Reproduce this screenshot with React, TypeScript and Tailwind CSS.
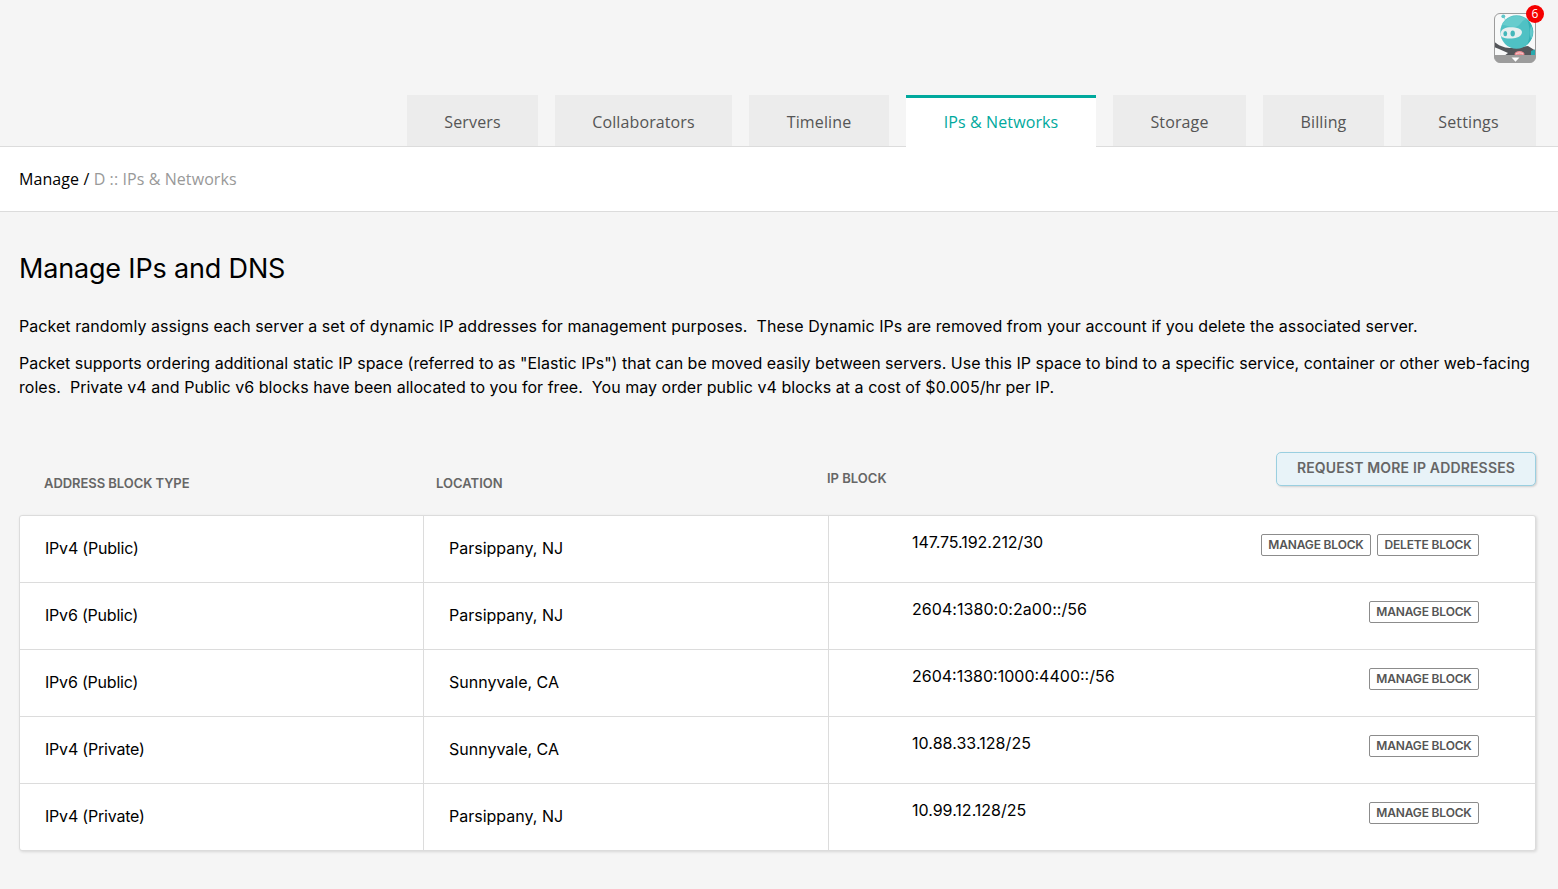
const tabs = [
  { label: "Servers", width: "w-[131px]" },
  { label: "Collaborators", width: "w-[177px]" },
  { label: "Timeline", width: "w-[140px]" },
  { label: "IPs & Networks", width: "w-[190px]", active: true },
  { label: "Storage", width: "w-[133px]" },
  { label: "Billing", width: "w-[121px]" },
  { label: "Settings", width: "w-[135px]" },
];

type Block = {
  type: string;
  location: string;
  ip: string;
  tracking: string;
  deletable?: boolean;
};

const blocks: Block[] = [
  { type: "IPv4 (Public)", location: "Parsippany, NJ", ip: "147.75.192.212/30", tracking: "tracking-[-0.07px]", deletable: true },
  { type: "IPv6 (Public)", location: "Parsippany, NJ", ip: "2604:1380:0:2a00::/56", tracking: "tracking-[0.05px]" },
  { type: "IPv6 (Public)", location: "Sunnyvale, CA", ip: "2604:1380:1000:4400::/56", tracking: "tracking-[0px]" },
  { type: "IPv4 (Private)", location: "Sunnyvale, CA", ip: "10.88.33.128/25", tracking: "tracking-[0.06px]" },
  { type: "IPv4 (Private)", location: "Parsippany, NJ", ip: "10.99.12.128/25", tracking: "tracking-[0px]" },
];

function Avatar() {
  return (
    <div className="relative h-[50px] w-[42px]">
      <svg width="42" height="50" viewBox="0 0 42 50">
        <defs>
          <clipPath id="frame">
            <rect x="0.5" y="0.5" width="41" height="49" rx="5.5" />
          </clipPath>
        </defs>
        <g clipPath="url(#frame)">
          <rect width="42" height="50" fill="#f8f9f9" />
          <path d="M9.5 3.5 12.5 9" stroke="#9fdcdd" strokeWidth="1" />
          <circle cx="9.3" cy="3.3" r="1.9" fill="#5fc6c9" />
          <path d="M0 28.5C5 33 12 36 20 34.5L34 33 42 38V43H10L14 40 5 36 0 34Z" fill="#54565a" />
          <path d="M37 38 42 36V43H37Z" fill="#27a9ae" />
          <ellipse cx="22.5" cy="19" rx="16.2" ry="16.8" fill="#4fc1c4" />
          <path d="M8 12C12 3 24 0 32 6 26 8 27 14 20 14 15 14 12 12 8 12Z" fill="#67cccd" />
          <path d="M33 6C41 13 42 24 33 32 37 23 36 14 33 6Z" fill="#35b0b4" />
          <path d="M37 13C39.5 17 39.5 22 37 26 35.5 22 35.5 17 37 13Z" fill="#65c9cc" />
          <path d="M6.5 20.5C7 15 14 13.5 21 14.5 27 15.5 29 18 27.5 21 25.5 25 19 26 13.5 25.5 9 25 6.5 24 6.5 20.5Z" fill="#e7efef" />
          <ellipse cx="11.3" cy="20.7" rx="1.9" ry="2.6" fill="#43b7ba" />
          <ellipse cx="18.7" cy="20.5" rx="2.2" ry="2.9" fill="#43b7ba" />
          <ellipse cx="25.5" cy="41" rx="5" ry="3" fill="#e98c92" />
          <path d="M22 41C24 39.5 27 39.5 29 41" stroke="#f7d5d7" fill="none" />
          <rect y="42" width="42" height="8" fill="#9c9c9c" />
          <path d="M17.5 44.5H25.5L21.5 48.8Z" fill="#fff" />
        </g>
        <rect x="0.5" y="0.5" width="41" height="49" rx="5.5" fill="none" stroke="#9c9c9c" />
      </svg>
      <span className="absolute -top-[8px] left-[32px] flex h-[18px] w-[18px] items-center justify-center rounded-full bg-[#f50000] font-['Open_Sans',sans-serif] text-[12px] leading-none text-white">
        6
      </span>
    </div>
  );
}

function SmallButton({ label, width }: { label: string; width: string }) {
  return (
    <button
      className={`h-[22px] ${width} shrink-0 rounded-[2px] border border-[#8c8c8c] bg-white text-center text-[12px] leading-[20px] font-semibold tracking-[-0.17px] whitespace-nowrap text-[#555]`}
    >
      {label}
    </button>
  );
}

export default function App() {
  return (
    <div className="flex h-[889px] w-[1558px] flex-col overflow-hidden bg-[#f5f5f5] font-[Inter,sans-serif] text-[16px] text-black">
      <header className="flex h-[147px] flex-col border-b border-[#dcdcdc]">
        <div className="flex h-[95px] shrink-0 justify-end pt-[13px] pr-[22px]">
          <Avatar />
        </div>
        <nav className="flex h-[51px] justify-end gap-[17px] pr-[22px] font-['Open_Sans',sans-serif] tracking-[0.12px]">
          {tabs.map((t) => (
            <a
              key={t.label}
              className={
                t.active
                  ? `${t.width} h-[52px] border-t-3 border-[#00a99d] bg-white text-center leading-[49px] text-[#00a99d]`
                  : `${t.width} h-[51px] bg-[#ececec] text-center leading-[55px] text-[#555]`
              }
            >
              {t.label}
            </a>
          ))}
        </nav>
      </header>

      <div className="h-[65px] border-b border-[#dcdcdc] bg-white pl-[19px] font-['Open_Sans',sans-serif] leading-[65px] tracking-[0.09px]">
        Manage / <span className="text-[#999]">D :: IPs &amp; Networks</span>
      </div>

      <main className="flex flex-col pr-[22px] pl-[19px]">
        <h1 className="mt-[37px] text-[27px] leading-[40px] tracking-[-0.17px]">Manage IPs and DNS</h1>
        <p className="mt-[25px] leading-[24px] tracking-[0.056px] whitespace-nowrap">
          Packet randomly assigns each server a set of dynamic IP addresses for management purposes.&nbsp; These
          Dynamic IPs are removed from your account if you delete the associated server.
        </p>
        <p className="mt-[13px] leading-[24px] whitespace-nowrap">
          <span className="tracking-[0.002px]">
            Packet supports ordering additional static IP space (referred to as "Elastic IPs") that can be moved easily
            between servers. Use this IP space to bind to a specific service, container or other web-facing
          </span>
          <br />
          <span className="tracking-[0.035px]">
            roles.&nbsp; Private v4 and Public v6 blocks have been allocated to you for free.&nbsp; You may order public
            v4 blocks at a cost of $0.005/hr per IP.
          </span>
        </p>

        <div className="mt-[53px] flex h-[63px] text-[13px] leading-[20px] font-semibold text-[#666]">
          <div className="w-[392px] pt-[21px] pl-[25px] tracking-[-0.06px]">ADDRESS BLOCK TYPE</div>
          <div className="w-[392px] pt-[21px] pl-[25px]">LOCATION</div>
          <div className="grow pt-[16px] pl-[24px]">IP BLOCK</div>
          <button className="h-[34px] w-[260px] rounded-[5px] border border-[#9acfe0] bg-[#e8f3f8] pb-[2px] text-[14px] tracking-[0.16px] text-[#666] shadow-[1px_1px_2px_rgba(0,0,0,0.15)]">
            REQUEST MORE IP ADDRESSES
          </button>
        </div>

        <div className="rounded-[3px] border border-[#dcdcdc] bg-white shadow-[1px_1px_3px_rgba(0,0,0,0.12)]">
          {blocks.map((b, i) => (
            <div key={i} className="flex h-[67px] border-b border-[#dcdcdc] last:h-[66px] last:border-b-0">
              <div className="w-[404px] border-r border-[#dcdcdc] pl-[25px] leading-[64px] tracking-[-0.2px]">
                {b.type}
              </div>
              <div className="w-[405px] border-r border-[#dcdcdc] pl-[25px] leading-[64px]">{b.location}</div>
              <div className="flex grow justify-between pr-[56px] pl-[83px]">
                <div className={`leading-[52px] ${b.tracking}`}>{b.ip}</div>
                <div className="flex gap-[6px] pt-[18px]">
                  <SmallButton label="MANAGE BLOCK" width="w-[110px]" />
                  {b.deletable && <SmallButton label="DELETE BLOCK" width="w-[102px]" />}
                </div>
              </div>
            </div>
          ))}
        </div>
      </main>
    </div>
  );
}
